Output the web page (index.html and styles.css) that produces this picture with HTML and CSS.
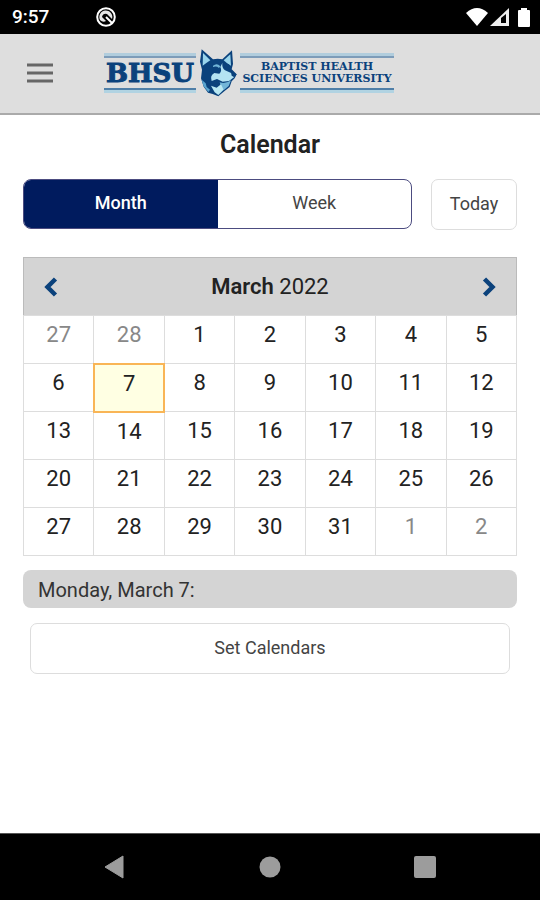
FILE: index.html
```html
<!DOCTYPE html>
<html lang="en">

<head>
    <meta charset="UTF-8">
    <meta name="viewport" content="width=device-width, initial-scale=1.0">
    <title>Calendar</title>
    <link rel="stylesheet" href="styles.css">
</head>

<body>
    <div class="status-bar">
        <span class="time">9:57</span>
        <svg width="20" height="20" viewBox="0 0 20 20">
            <circle cx="10" cy="10" r="8.8" fill="none" stroke="#fff" stroke-width="2" />
            <path d="M4 13A6.500 6.500 0 1 1 16 12L11 7Q7 6 6 10L10 14Q7 16 4 13z" fill="#e4e4e4" />
            <path d="M10 10l6 6" stroke="#fff" stroke-width="2" />
        </svg>
        <div class="status-icons">
            <svg width="22" height="18" viewBox="0 0 22 18">
                <path d="M0 5Q11-5 22 5L11 18z" fill="#fff" />
            </svg>
            <svg width="19" height="18" viewBox="0 0 19 18">
                <path d="M0 18L19 0v18z" fill="#eee" />
                <path d="M11 10l5-4v9h-5z" fill="#000" />
            </svg>
            <svg class="battery" width="12" height="19" viewBox="0 0 12 19">
                <path d="M3 2V0h6v2h2q1 0 1 1v15q0 1-1 1H1q-1 0-1-1V3q0-1 1-1z" fill="#fff" />
            </svg>
        </div>
    </div>

    <header class="header">
        <button class="menu-button" aria-label="Menu">
            <svg width="26" height="20" viewBox="0 0 26 20">
                <path d="M0 2h26M0 10h26M0 18h26" stroke="#666" stroke-width="3" />
            </svg>
        </button>
        <a class="logo" href="#">
            <span class="logo-short">BHSU</span>
            <svg class="mascot" width="38" height="48" viewBox="0 0 114 144">
                <path d="M8 1L42 31Q56 27 70 31L99 4L102 45L98 61L113 76L107 88L98 97L92 114L74 128L58 142L41 135L27 131L14 113L6 88L9 62L3 38z" fill="#0b427c" />
                <path d="M12 12L34 34L22 42L11 50z" fill="#9ad5ec" />
                <path d="M94 16L74 34L86 44L96 50z" fill="#9ad5ec" />
                <path d="M70 42Q68 58 78 64L103 75L106 84L90 96L71 98L54 90L38 96Q32 80 46 72L61 74Q70 66 64 54z" fill="#b4e3f2" />
                <path d="M42 50Q54 40 64 52L60 57Q52 50 42 54z" fill="#72b5d8" />
                <path d="M74 40L90 46L96 60L84 64L76 54z" fill="#0b427c" />
                <path d="M96 70L113 76L106 85L98 80z" fill="#0b427c" />
                <path d="M62 100Q80 106 96 94L89 111L74 124L66 112z" fill="#72b5d8" />
                <path d="M36 110L53 116L66 106L74 122L58 138L47 130z" fill="#b9e8f3" />
                <path d="M8 92L20 103L23 114L33 122L28 129L14 112z" fill="#5aa5cf" />
            </svg>
            <span class="logo-name">BAPTIST HEALTH<br>SCIENCES UNIVERSITY</span>
        </a>
    </header>

    <main class="content">
        <h1>Calendar</h1>

        <div class="toolbar">
            <div class="view-switch">
                <button class="active">Month</button>
                <button>Week</button>
            </div>
            <button class="button">Today</button>
        </div>

        <div class="month-header">
            <button aria-label="Previous month">
                <svg width="14" height="20" viewBox="0 0 14 20">
                    <path d="M11.500 2L3.500 10l8 8" fill="none" stroke="#0b427c" stroke-width="4.500" />
                </svg>
            </button>
            <h2>March <span>2022</span></h2>
            <button aria-label="Next month">
                <svg width="14" height="20" viewBox="0 0 14 20">
                    <path d="M2.500 2l8 8-8 8" fill="none" stroke="#0b427c" stroke-width="4.500" />
                </svg>
            </button>
        </div>
        <table class="month">
            <tbody>
                <tr>
                    <td class="other">27</td>
                    <td class="other">28</td>
                    <td>1</td>
                    <td>2</td>
                    <td>3</td>
                    <td>4</td>
                    <td>5</td>
                </tr>
                <tr>
                    <td>6</td>
                    <td class="today">7</td>
                    <td>8</td>
                    <td>9</td>
                    <td>10</td>
                    <td>11</td>
                    <td>12</td>
                </tr>
                <tr>
                    <td>13</td>
                    <td>14</td>
                    <td>15</td>
                    <td>16</td>
                    <td>17</td>
                    <td>18</td>
                    <td>19</td>
                </tr>
                <tr>
                    <td>20</td>
                    <td>21</td>
                    <td>22</td>
                    <td>23</td>
                    <td>24</td>
                    <td>25</td>
                    <td>26</td>
                </tr>
                <tr>
                    <td>27</td>
                    <td>28</td>
                    <td>29</td>
                    <td>30</td>
                    <td>31</td>
                    <td class="other">1</td>
                    <td class="other">2</td>
                </tr>
            </tbody>
        </table>

        <div class="day-title">Monday, March 7:</div>
        <button class="button set-calendars">Set Calendars</button>
    </main>

    <nav class="nav-bar">
        <button aria-label="Back">
            <svg width="22" height="24" viewBox="0 0 22 24">
                <path d="M1 12L19 1v22z" fill="#9c9c9c" stroke="#9c9c9c" stroke-linejoin="round" />
            </svg>
        </button>
        <button aria-label="Home">
            <svg width="22" height="22" viewBox="0 0 22 22">
                <circle cx="11" cy="11" r="10.500" fill="#9c9c9c" />
            </svg>
        </button>
        <button aria-label="Recent apps">
            <svg width="22" height="22" viewBox="0 0 22 22">
                <rect width="22" height="22" rx="2" fill="#9c9c9c" />
            </svg>
        </button>
    </nav>
</body>

</html>
```

FILE: styles.css
```css
* {
    box-sizing: border-box;
}

body {
    font-family: Roboto, Arial, sans-serif;
    margin: 0;
    min-height: 100vh;
    display: flex;
    flex-direction: column;
    background-color: #fff;
    color: #222;
}

button {
    font-family: inherit;
    background: none;
    border: none;
    padding: 0;
    cursor: pointer;
}

svg {
    display: block;
}

.status-bar {
    display: flex;
    align-items: center;
    height: 34px;
    padding: 0 10px 0 12px;
    background-color: #000;
    color: #fff;
}

.time {
    width: 84px;
    font-size: 19px;
    font-weight: 500;
    line-height: 36px;
}

.status-icons {
    display: flex;
    align-items: center;
    gap: 2px;
    margin-left: auto;
}

.battery {
    margin-left: 7px;
}

.header {
    display: flex;
    align-items: center;
    gap: 51px;
    height: 81px;
    padding: 0 27px 2px;
    background-color: #dedede;
    border-bottom: 2px solid #aaa;
}

.logo {
    display: flex;
    align-items: center;
    gap: 3px;
    color: #0b427c;
    font-family: "DejaVu Serif", serif;
    font-weight: bold;
    text-decoration: none;
    text-align: center;
}

.logo-short,
.logo-name {
    height: 34px;
    border-top: 2px solid #7d9cb9;
    border-bottom: 2px solid #4f7fa8;
    box-shadow: 0 -3px #b1cddd, 0 3px #b1d3e2;
}

.logo-short {
    width: 92px;
    font-size: 26px;
    line-height: 31px;
    -webkit-text-stroke: 1px #0b427c;
}

.logo-name {
    width: 154px;
    padding-top: 3px;
    font-size: 11px;
    line-height: 12px;
    white-space: nowrap;
}

.content {
    flex: 1;
    display: flex;
    flex-direction: column;
    padding: 14px 23px;
}

h1 {
    margin: 0 0 18px;
    font-size: 25px;
    font-weight: 600;
    line-height: 32px;
    text-align: center;
}

.toolbar {
    display: flex;
    gap: 19px;
    margin-bottom: 27px;
}

.view-switch {
    flex: 1;
    display: flex;
    height: 50px;
    border: 1px solid #4c4c80;
    border-radius: 8px;
    overflow: hidden;
}

.view-switch button {
    flex: 1;
    color: #444;
    font-size: 18px;
    padding-bottom: 4px;
}

.view-switch .active {
    background-color: #001b5e;
    color: #fff;
    font-weight: 500;
}

.button {
    height: 51px;
    width: 86px;
    border: 1px solid #ddd;
    border-radius: 7px;
    color: #444;
    font-size: 18px;
    padding-bottom: 3px;
}

.month-header {
    display: flex;
    justify-content: space-between;
    align-items: center;
    height: 58px;
    padding: 0 20px;
    background-color: #d4d4d4;
    border: 1px solid #bbb;
    border-bottom: none;
}

.month-header h2 {
    margin: 0;
    font-size: 22px;
    font-weight: 600;
}

.month-header span {
    font-weight: 400;
}

.month {
    width: 100%;
    table-layout: fixed;
    border-collapse: collapse;
}

.month td {
    height: 48px;
    padding: 6px 0 0;
    border: 1px solid #ddd;
    font-size: 22px;
    line-height: 26px;
    text-align: center;
    vertical-align: top;
}

.month .other {
    color: #888;
}

.month .today {
    background-color: #ffffe3;
    border: 2px solid #f9b556;
}

.day-title {
    margin-top: 14px;
    padding: 2px 15px 0;
    border-radius: 8px;
    background-color: #d4d4d4;
    color: #333;
    font-size: 20px;
    line-height: 36px;
}

.set-calendars {
    width: auto;
    margin: 15px 7px 0;
}

.nav-bar {
    display: flex;
    align-items: center;
    justify-content: space-between;
    height: 67px;
    padding: 0 104px;
    background-color: #000;
    border-top: 1px solid #555;
}
```
